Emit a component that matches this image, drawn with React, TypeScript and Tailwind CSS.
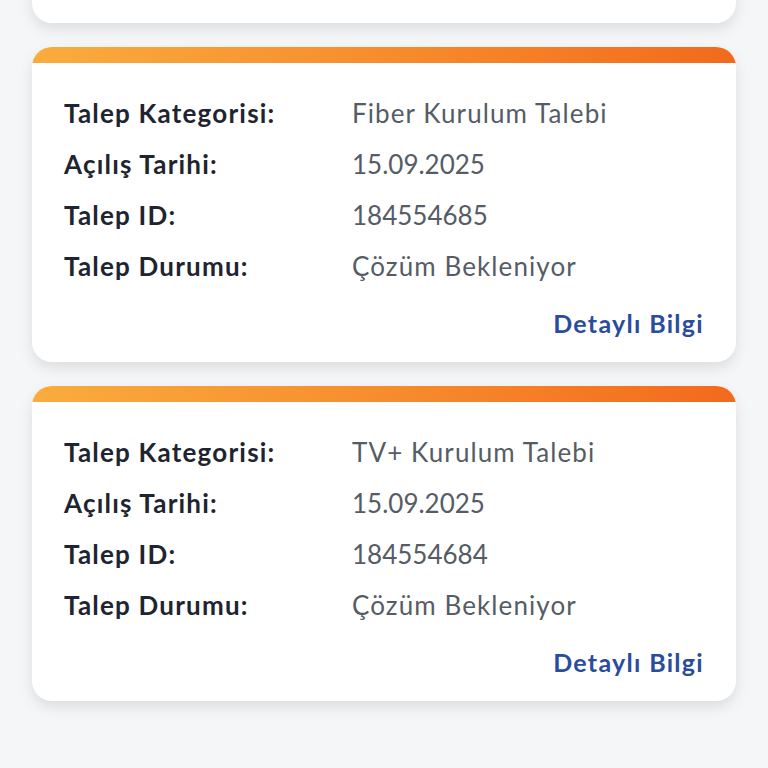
const requests = [
  { category: 'İnternet Kurulum Talebi', date: '15.09.2025', id: '184554686', status: 'Çözüm Bekleniyor' },
  { category: 'Fiber Kurulum Talebi', date: '15.09.2025', id: '184554685', status: 'Çözüm Bekleniyor' },
  { category: 'TV+ Kurulum Talebi', date: '15.09.2025', id: '184554684', status: 'Çözüm Bekleniyor' },
]

type Req = (typeof requests)[number]

function Row({ label, value, numeric = false }: { label: string; value: string; numeric?: boolean }) {
  return (
    <div className="flex h-[51px] items-center">
      <div className="w-[288px] text-[26px] font-bold tracking-[1.2px] text-[#1e2430]">{label}</div>
      <div className={numeric ? 'text-[26px] text-[#565c66]' : 'text-[26px] tracking-[1.1px] text-[#565c66]'}>
        {value}
      </div>
    </div>
  )
}

function RequestCard({ req }: { req: Req }) {
  return (
    <div className="overflow-hidden rounded-[20px] bg-white shadow-[0_6px_14px_rgba(0,0,0,0.10)]">
      {/* orange header strip */}
      <div className="h-4 bg-gradient-to-r from-[#f9ac3e] to-[#f26a1c]" />
      <div className="px-8 pt-[25px] pb-[14px]">
        <Row label="Talep Kategorisi:" value={req.category} />
        <Row label="Açılış Tarihi:" value={req.date} numeric />
        <Row label="Talep ID:" value={req.id} numeric />
        <Row label="Talep Durumu:" value={req.status} />
        <div className="mt-2 flex h-[48px] items-center justify-end">
          <span className="text-[25px] font-bold tracking-[1.3px] text-[#2a4c9c]">Detaylı Bilgi</span>
        </div>
      </div>
    </div>
  )
}

export default function App() {
  return (
    <div className="h-[768px] overflow-hidden bg-[#f5f6f8]" style={{ fontFamily: 'Lato, "Noto Sans", sans-serif' }}>
      <div className="-mt-[292px] flex flex-col gap-6 px-8">
        {requests.map((r) => (
          <RequestCard key={r.id} req={r} />
        ))}
      </div>
    </div>
  )
}
